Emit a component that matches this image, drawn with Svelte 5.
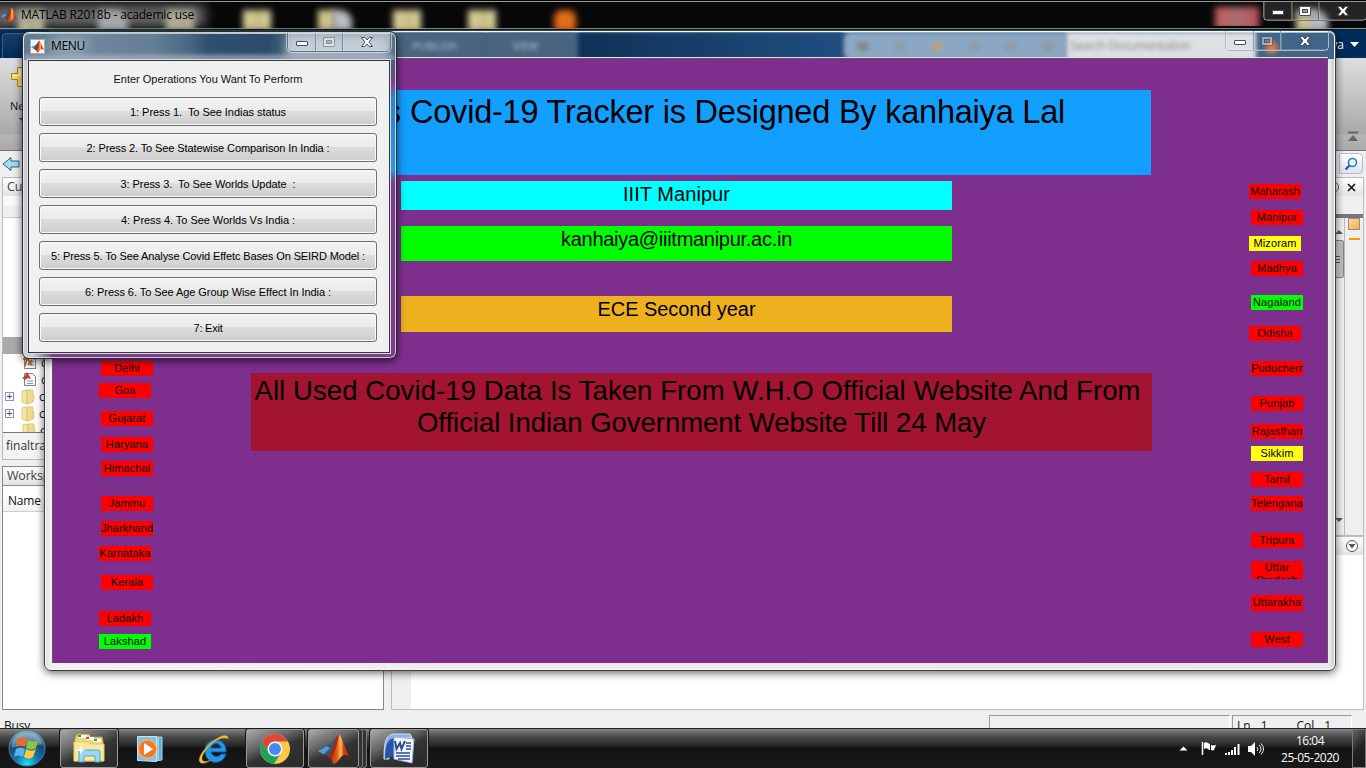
<script>
  // Spreads or tightens the letters of a line so that it takes the given width.
  function fit(node, target) {
    const range = document.createRange();
    range.selectNodeContents(node);
    const natural = range.getBoundingClientRect().width;
    node.style.letterSpacing = (target - natural) / node.textContent.length + 'px';
  }

  function stack(rows, start) {
    let bottom = start;
    return rows.map(([name, top, x = 2, color = 'red', h = 15]) => {
      const gap = top - bottom;
      bottom = top + h;
      return { name, gap, x, color, h };
    });
  }

  const operations = [
    ['1: Press 1.  To See Indias status', 156],
    ['2: Press 2. To See Statewise Comparison In India :', 243],
    ['3: Press 3.  To See Worlds Update  :', 175],
    ['4: Press 4. To See Worlds Vs India :', 174],
    ['5: Press 5. To See Analyse Covid Effetc Bases On SEIRD Model :', 314],
    ['6: Press 6. To See Age Group Wise Effect In India :', 246],
    ['7: Exit', 29]
  ];

  const leftStates = stack([
    ['Delhi', 361], ['Goa', 383, 0], ['Gujarat', 411], ['Haryana', 437], ['Himachal', 461],
    ['Jammu', 496], ['Jharkhand', 521], ['Karnataka', 546, 0], ['Kerala', 575],
    ['Ladakh', 611, 0], ['Lakshad', 634, 0, 'lime']
  ], 59);

  const rightStates = stack([
    ['Maharash', 184, 0], ['Manipur', 210], ['Mizoram', 236, 0, 'yellow'], ['Madhya', 261],
    ['Nagaland', 295, 2, 'lime'], ['Odisha', 326, 0], ['Puducherr', 361], ['Punjab', 396],
    ['Rajasthan', 424], ['Sikkim', 446, 2, 'yellow'], ['Tamil', 472], ['Telengana', 496],
    ['Tripura', 533], ['Uttar Pradesh', 561, 2, 'red tall', 18], ['Uttarakha', 595, 2, 'red', 16], ['West', 632]
  ], 59);

  const desktopIcons = [
    [18, 26, 'folder'], [98, 30, 'paper'], [166, 28, 'folder'], [243, 28, 'folder'], [318, 17, 'folder'],
    [332, 20, 'paper'], [393, 28, 'folder'], [468, 28, 'folder'], [554, 22, 'orange'], [1215, 44, 'pink'],
    [1296, 20, 'folder'], [1308, 20, 'paper']
  ];
</script>

{#snippet matlab(size)}
  <svg width={size} height={size} viewBox="0 0 32 32">
    <defs>
      <linearGradient id="peak" x1="0" x2="1"><stop offset="0" stop-color="#8c2418" /><stop offset=".45" stop-color="#e85a1c" /><stop offset=".6" stop-color="#ffc04a" /><stop offset=".72" stop-color="#d8401a" /><stop offset="1" stop-color="#9c1c10" /></linearGradient>
    </defs>
    <path d="M0 18 9 13 13 15 9 22 5 21Z" fill="#4f9bd0" />
    <path d="M9 13c4-1 6-5 9-9l-4 14-5 5-3-2 6-6Z" fill="#285b80" />
    <path d="M21 1c3 3 6 15 11 23-4-2-6-3-9 0-3 4-5 7-8 7-1-5-3-7-6-8 5-3 8-20 12-22Z" fill="url(#peak)" />
    <path d="M21 1c-2 9-3 18-8 25l-4-3c5-3 8-20 12-22Z" fill="#972c1e" />
  </svg>
{/snippet}

{#snippet controls(kind)}
  <div class="controls {kind}">
    <span><svg width="14" height="8"><rect x="1.5" y="2.5" width="11" height="4" rx=".5" fill="#fff" stroke="#484c5c" /></svg></span>
    <span class="max"><svg width="14" height="12"><rect x="1.5" y="1.5" width="11" height="9" rx=".5" fill="#fff" stroke="#484c5c" /><rect x="4.5" y="4.5" width="5" height="3" fill="#999" stroke="#484c5c" /></svg></span>
    <span class="close"><svg width="14" height="12"><path d="m1.5 1.5h3.3L7 4l2.200-2.500h3.300L9 6l3.500 4.500H9.200L7 8l-2.200 2.500H1.500L5 6Z" fill="#fff" stroke="#484c5c" /></svg></span>
  </div>
{/snippet}

{#snippet chips(list)}
  {#each list as s}
    <div class="chip {s.color}" style="margin-top:{s.gap}px;margin-left:{s.x}px;height:{s.h}px">{s.name}</div>
  {/each}
{/snippet}

{#snippet folder()}
  <svg width="14" height="16" viewBox="0 0 14 16"><path d="M1 2 6 1v14l-5-2Z" fill="#f4e6a3" stroke="#dfc879" /><path d="M6 1h6v12l-6 2Z" fill="#eedc91" stroke="#dbc578" /><path d="M12 6h1v6h-1Z" fill="#fff6c8" stroke="#e0cc83" /></svg>
{/snippet}

<div class="desktop">
  <div class="main">
    <header class="mainbar">
      {#each desktopIcons as [x, w, kind]}
        <i class="blurred {kind}" style="left:{x}px;width:{w}px"></i>
      {/each}
      <i class="glow"></i>
      <span class="logo">{@render matlab(16)}</span>
      <span class="title" use:fit={173}>MATLAB R2018b - academic use</span>
      {@render controls('dark')}
    </header>
    <div class="tabs"><i></i><span>ya</span><svg width="9" height="5"><path d="M0 0h9L4.500 5Z" fill="#fff" /></svg></div>
    <div class="strip">
      <div class="new">
        <svg width="20" height="24" viewBox="0 0 20 24"><path d="M7.500 1.500h6v6h6v6h-6v7h-6v-7h-6v-6h6Z" fill="#f6dc65" stroke="#ad8117" /><path d="M9 3h2v7H3V9h6Z" fill="#fffbd5" /></svg>
        <span>New</span><b></b>
      </div>
      <svg class="collapse" width="12" height="12"><path d="M1 1.500h10" stroke="#666" stroke-width="2" /><path d="m1 10 5-6 5 6Z" fill="#666" /></svg>
    </div>
    <div class="address">
      <svg width="18" height="16" viewBox="0 0 18 16"><path d="M1 8 9 1.500V5h8v6H9v3.500Z" fill="#a9d7ec" stroke="#286391" /></svg>
      <div class="find"><svg width="14" height="14"><circle cx="8.500" cy="5.500" r="4" fill="#e5f4ff" stroke="#347ac0" stroke-width="1.600" /><path d="m5.500 8.500-4 4" stroke="#2459a0" stroke-width="2.200" /></svg></div>
    </div>
    <div class="work">
      <div class="left">
        <section class="files">
          <div class="head">Current Folder</div>
          <div class="subhead"></div>
          <div class="tree">
            <div class="picked"></div>
            <div class="row"><svg width="15" height="15"><rect x="2.500" y="1.500" width="11" height="12" fill="#f7f7fa" stroke="#7c8297" /><path d="M7 7h5M7 10h5" stroke="#858bab" /><path d="M6 0 3 11M1 4h6M6 5l4 5M10 5l-4 5" stroke="#bd6215" stroke-width="1.500" /></svg><span>c</span></div>
            <div class="row"><svg width="15" height="15"><path d="M2.500 1.500h8l3 3v9h-11Z" fill="#f8f9ff" stroke="#727f9d" /><path d="M5 9h6M5 11.500h6" stroke="#7b93be" /><path d="m0 6 3-2 2-4 4 7-4-1-1 2Z" fill="#c73b20" /></svg><span>c</span></div>
            <div class="row"><em>+</em>{@render folder()}<span>c</span></div>
            <div class="row"><em>+</em>{@render folder()}<span>c</span></div>
            <div class="row">{@render folder()}<span>c</span></div>
          </div>
          <div class="details">finaltracker.m</div>
        </section>
        <section class="space">
          <div class="head">Workspace</div>
          <div class="name">Name</div>
          <div class="empty"></div>
        </section>
      </div>
      <div class="right">
        <section class="editor">
          <div class="head"><svg width="30" height="14"><circle cx="4" cy="7" r="5.500" fill="none" stroke="#666" /><path d="m19 4 7 7m0-7-7 7" stroke="#111" stroke-width="1.600" /></svg></div>
          <div class="band"></div>
          <div class="code">
            <div class="scroll"><b class="up"></b><div class="thumb"><i></i><i></i><i></i></div><b class="down"></b></div>
            <div class="marks"><i></i><b></b></div>
          </div>
        </section>
        <section class="command">
          <div class="head"><svg width="14" height="14"><circle cx="7" cy="7" r="5.500" fill="#fff" stroke="#555" /><path d="M3.500 5h7L7 9.500Z" fill="#555" /></svg></div>
          <div class="prompt"></div>
        </section>
      </div>
    </div>
    <footer class="status"><span class="busy">Busy</span><div></div><div class="pos"><span>Ln</span><span>1</span><span>Col</span><span>1</span></div></footer>
  </div>

  <div class="figure">
    <header class="figbar">
      <span class="tab one">PUBLISH</span><span class="tab">VIEW</span><i class="deep"></i>
      <span class="tools"><i></i><i></i><i></i><i></i><i></i><i></i></span>
      <span class="search">Search Documentation</span><i class="flame"></i>
    </header>
    <div class="over">{@render controls('mid')}</div>
    <div class="canvas">
      <div class="side">{@render chips(leftStates)}</div>
      <div class="center">
        <div class="blue"><span>{'This '}</span><span use:fit={655}>Covid-19 Tracker is Designed By kanhaiya Lal</span></div>
        <div class="cyan"><span use:fit={107}>IIIT Manipur</span></div>
        <div class="green"><span use:fit={231}>kanhaiya@iiitmanipur.ac.in</span></div>
        <div class="amber"><span use:fit={158}>ECE Second year</span></div>
        <div class="maroon">
          <span class="first" use:fit={886}>All Used Covid-19 Data Is Taken From W.H.O Official Website And From</span>
          <span use:fit={569}>Official Indian Government Website Till 24 May</span>
        </div>
      </div>
      <div class="side east">{@render chips(rightStates)}</div>
    </div>
  </div>

  <div class="menu">
    <header class="menubar">
      <i class="haze"></i><i class="haze low"></i>
      <span class="icon">{@render matlab(13)}</span><span class="title" use:fit={34}>MENU</span>
      {@render controls('light')}
    </header>
    <div class="body">
      <p><span use:fit={189}>Enter Operations You Want To Perform</span></p>
      {#each operations as [label, w]}
        <button><span use:fit={w}>{label}</span></button>
      {/each}
    </div>
  </div>

  <nav class="taskbar">
    <div class="orb">
      <svg width="38" height="38" viewBox="0 0 38 38">
        <defs>
          <radialGradient id="orb" cx=".5" cy=".95" r=".9"><stop offset="0" stop-color="#1fe3ff" /><stop offset=".35" stop-color="#1377ae" /><stop offset=".7" stop-color="#124a76" /><stop offset="1" stop-color="#88a7b8" /></radialGradient>
        </defs>
        <circle cx="19" cy="19" r="18" fill="url(#orb)" stroke="#4b7b98" />
        <path d="M4 15C7 0 31 0 34 15c-9 4-21-1-30 4Z" fill="#d3e6ee" opacity=".35" />
        <path d="M10 10c3-2 6-2 9 0l-2 8c-3-2-6-2-9 0Z" fill="#ee6a2b" /><path d="M20 11c4 2 7 2 10 0l-2 8c-3 2-6 2-10 0Z" fill="#8ec63f" />
        <path d="M8 20c3-2 6-2 9 0l-2 8c-3-2-6-2-9 0Z" fill="#5eb3ea" /><path d="M18 20c4 2 7 2 10 0l-3 8c-3 2-6 2-9 0Z" fill="#fcca3b" />
      </svg>
    </div>
    <div class="task explorer">
      <svg width="34" height="31" viewBox="0 0 34 31">
        <path d="M3 5 5 1h12l2 3h11l1 4v20H2Z" fill="#f2d675" stroke="#ad924a" />
        <path d="M6 2h9v3H6Z" fill="#fff" /><path d="M6 2h3v2H6Z" fill="#18a53a" /><path d="M14 4h8v3h-8Z" fill="#fff" /><path d="M14 4h3v2h-3Z" fill="#d94c34" /><path d="M21 6h8v3h-8Z" fill="#fff" /><path d="M22 6h3v2h-3Z" fill="#2d89d1" />
        <path d="M2 9h14l2 2h14v17H2Z" fill="#fae99e" stroke="#e1ca73" />
        <path d="M7 29V19q0-2 2-2h17q2 0 2 2v10h-5v-6H12v6Z" fill="#9bd8ef" stroke="#4da5c9" />
        <path d="m9 12 1 4 4 1-4 1-1 4-1-4-4-1 4-1Z" fill="#fff" />
      </svg>
    </div>
    <div class="plain wmp">
      <svg width="28" height="28" viewBox="0 0 28 28"><path d="M18 2h8v23l-8 1Z" fill="#6caecb" stroke="#a4d7ea" /><path d="M22 2v24" stroke="#c4e6f2" /><path d="M1.500 1.500h19v25l-19-1Z" fill="#8ac0dc" stroke="#c4e3f0" /><circle cx="11.500" cy="14" r="9" fill="#f27a21" stroke="#ffb36b" /><path d="M8 8v12l9-6Z" fill="#fff" /></svg>
    </div>
    <div class="plain ie">
      <svg width="34" height="32" viewBox="0 0 34 32">
        <path d="M29 19H14c1 5 8 6 10 2h5c-3 12-21 11-21-3C8 3 30 3 29 19ZM14 15h10c-1-6-9-6-10 0Z" fill="#2595e4" stroke="#0a5ca8" fill-rule="evenodd" />
        <path d="M31 6c1-6-8-4-16 3C5 17-1 28 4 30c3 1 7-1 10-3-5 2-9 2-9-1 0-8 17-25 26-20Z" fill="#f6c436" stroke="#b9851b" stroke-width=".5" />
      </svg>
    </div>
    <div class="task chrome">
      <svg width="32" height="32" viewBox="0 0 32 32"><circle cx="16" cy="16" r="15" fill="#fcc94a" /><path d="M3 8.500A15 15 0 0 1 29 8.500H16a7.500 7.500 0 0 0-6.500 11Z" fill="#dc4639" /><path d="M3 8.500a15 15 0 0 0 12 22.500l7.200-11.500A7.500 7.500 0 0 1 9.500 19.500Z" fill="#22a05d" /><circle cx="16" cy="16" r="7.500" fill="#f5f5f5" /><circle cx="16" cy="16" r="6" fill="#4388ee" /></svg>
    </div>
    <div class="task mat">{@render matlab(32)}</div><i class="layer"></i><i class="layer"></i>
    <div class="task word">
      <svg width="32" height="32" viewBox="0 0 32 32"><path d="M1 26C1 8 3 1 12 1h15l2 4H14C7 5 6 12 6 26Z" fill="#8eafe4" stroke="#d6e4fa" /><path d="M2 26C2 13 4 6 11 5v18Z" fill="#2655a8" /><path d="m11 4 20 2-2 24-18-4Z" fill="#f4f7ff" stroke="#9db5df" /><path d="m12 8 1.500 8 3.500-6 1.500 6L22 8" fill="none" stroke="#244b98" stroke-width="2" /><path d="M23 10h5m-5 3h5m-5 3h5M13 20h14m-14 3h14m-12 3h12" fill="none" stroke="#244b98" stroke-width="1.400" /></svg>
    </div>
    <div class="tray">
      <svg width="9" height="5"><path d="M.5 4.500h8L4.500.5Z" fill="#fff" /></svg>
      <svg class="flag" width="16" height="15"><path d="M1.500 1v13" stroke="#fff" stroke-width="1.500" /><path d="M3 2c3-2 4 1 6 1v6C7 9 6 6 3 8ZM10 4c2 1 3 0 5 0l-2 5c-1 1-2 0-3 0Z" fill="#fff" /></svg>
      <svg class="signal" width="15" height="12"><path d="M1 12v-2M4 12V9M7 12V7M10 12V4M13.500 12V1" stroke="#fff" stroke-width="2" /></svg>
      <svg width="17" height="14"><path d="M1 4h3l4-4v14l-4-4H1Z" fill="#fff" /><path d="M10 5q2 2 0 4M12 3q4 4 0 8M14 1.500q5 5.500 0 11" fill="none" stroke="#eee" /></svg>
      <div class="clock"><span use:fit={28}>16:04</span><span use:fit={58}>25-05-2020</span></div>
    </div>
    <div class="peek"></div>
  </nav>
</div>

<style>
  :global(body) { margin: 0; overflow: hidden; }
  .desktop, .desktop * { box-sizing: border-box; }
  .desktop { position: relative; width: 1366px; height: 768px; overflow: hidden; background: #000; font: 12px "Open Sans", "Noto Sans", sans-serif; color: #111; }
  svg { display: block; flex: none; }
  .main { display: flex; flex-direction: column; height: 728px; background: #efefef; }

  .mainbar { position: relative; flex: none; display: flex; align-items: flex-start; height: 30px; background: #080808; border-top: 1px solid #000; overflow: hidden; box-shadow: inset 0 1px #9c9c9c, inset 0 -1px #052233, inset 0 -2px #8e9792; }
  .blurred { position: absolute; top: 9px; height: 24px; filter: blur(3px); clip-path: inset(-10px -10px 5px -10px); }
  .blurred.folder { background: linear-gradient(90deg, #d9d29b, #c8bd83 60%, #ddd6a5); }
  .blurred.paper { background: #b9bcc1; border-radius: 2px 12px 0 0; }
  .blurred.orange { background: #e36c18; border-radius: 8px; }
  .blurred.pink { background: linear-gradient(90deg, #c4595f, #a8706f 50%, #bc505c); top: 6px; }
  .glow { position: absolute; left: -10px; top: 4px; width: 215px; height: 22px; background: rgba(150, 150, 150, .68); filter: blur(6px); }
  .mainbar .logo { position: relative; margin: 6px 4px 0 1px; }
  .mainbar .title { position: relative; line-height: 28px; color: #000; white-space: nowrap; }
  .mainbar .controls { margin-left: auto; margin-top: 0; margin-right: -1px; }

  .controls { position: relative; display: flex; flex: none; width: 104px; height: 20px; border: 1px solid #aeb9c2; border-top: 0; border-radius: 0 0 5px 5px; }
  .controls span { width: 28px; display: flex; align-items: center; justify-content: center; border-right: 1px solid #909ba4; box-shadow: inset 1px 0 rgba(255, 255, 255, .2), inset 0 -1px rgba(255, 255, 255, .2); }
  .controls span:first-child svg { margin-top: 3px; }
  .controls .max { width: 27px; }
  .controls .close { flex: 1; border: 0; }
  .controls.dark { border-color: #777; background: rgba(120, 120, 120, .25); }
  .controls.dark span { border-color: #666; }
  .controls.light .max svg, .controls.mid .max svg { opacity: .45; }
  .controls.light { background: rgba(230, 235, 240, .5); border-color: #65717d; box-shadow: 0 0 0 1px rgba(235, 240, 245, .6); }
  .controls.light span { border-color: #7d8994; }

  .tabs { flex: none; display: flex; align-items: center; justify-content: flex-end; height: 28px; padding-right: 7px; color: #fff; background: #002c5c; }
  .tabs i { width: 42px; height: 25px; margin: 3px auto 0 2px; background: linear-gradient(#163e68, #052c5c); border: 1px solid #396083; border-bottom: 0; border-radius: 4px 0 0 0; }
  .tabs span { margin-right: 6px; }
  .strip { flex: none; height: 93px; display: flex; justify-content: space-between; align-items: flex-end; background: linear-gradient(#dedede, #a9a9a9 76px, #b5b5b5 77px, #aaa); border-bottom: 1px solid #777; }
  .new { height: 84px; width: 40px; padding-left: 10px; font-size: 11px; }
  .new span { display: block; margin-top: 8px; line-height: 16px; }
  .new b { display: block; margin-left: 9px; border: 3px solid transparent; border-top-color: #333; margin-top: 4px; width: 0; }
  .collapse { margin: 0 7px 7px 0; }
  .address { flex: none; height: 25px; display: flex; align-items: center; justify-content: space-between; padding: 0 3px 0 2px; background: #efefef; }
  .find { width: 24px; height: 21px; display: flex; align-items: center; justify-content: center; border: 1px solid #b6bdc9; border-radius: 0 4px 4px 0; background: linear-gradient(#fff, #dce4f1); }

  .work { display: flex; height: 534px; padding: 1px 2px 0; gap: 7px; flex: none; }
  .left { width: 382px; display: flex; flex-direction: column; gap: 6px; }
  section { display: flex; flex-direction: column; border: 1px solid #bbb; background: #fff; }
  .files { height: 283px; }
  .space { flex: 1; border-color: #808890; }
  .head { flex: none; height: 18px; line-height: 17px; padding-left: 4px; font-size: 12.5px; letter-spacing: -.2px; color: #444; background: linear-gradient(#fff, #e3e3e3); overflow: hidden; white-space: nowrap; }
  .subhead { flex: none; height: 22px; background: linear-gradient(#fafafa 9px, #edeff2 10px); border-bottom: 1px solid #ccc; }
  .tree { height: 219px; overflow: hidden; border-bottom: 1px solid #777; }
  .picked { height: 17px; margin-top: 119px; background: #aaa; }
  .row { height: 17px; display: flex; align-items: center; gap: 4px; padding-left: 19px; }
  .row em { width: 9px; height: 9px; font: 10px/7px "Liberation Sans", sans-serif; text-align: center; color: #204a8d; border: 1px solid #9096a5; margin: 0 3px 0 -17px; }
  .details { line-height: 26px; padding-left: 3px; color: #333; background: #f3f3f3; flex: 1; }
  .name { flex: none; height: 27px; line-height: 29px; padding-left: 5px; letter-spacing: -.2px; background: linear-gradient(#fff 10px, #f0f1f3); border-top: 1px solid #888; border-bottom: 1px solid #d0d0d0; }
  .right { flex: 1; display: flex; flex-direction: column; }
  .editor { height: 359px; }
  .right .head { display: flex; justify-content: flex-end; align-items: center; padding-right: 4px; }
  .band { height: 22px; background: #f0f0f0; border-bottom: 4px solid #777; }
  .code { flex: 1; display: flex; justify-content: flex-end; background: #efefef; }
  .scroll { width: 17px; display: flex; flex-direction: column; align-items: center; border-right: 1px solid #bbb; background: #f0f0f0; }
  .scroll b { border: 4px solid transparent; width: 0; margin-left: 6px !important; }
  .up { border-bottom-color: #555 !important; margin-top: 8px; }
  .down { border-top-color: #555 !important; margin: auto 0 9px; }
  .thumb { width: 16px; height: 38px; margin-top: 6px; border: 1px solid #888; border-radius: 2px; background: linear-gradient(90deg, #eee, #bbb); display: flex; flex-direction: column; align-items: center; justify-content: center; gap: 2px; }
  .thumb i { width: 8px; height: 1px; background: #555; }
  .marks { width: 18px; display: flex; flex-direction: column; align-items: center; }
  .marks i { width: 12px; height: 12px; background: linear-gradient(135deg, #ffd79e, #ffaa42); border: 1px solid #8e8e8e; }
  .marks b { width: 11px; height: 2px; margin-top: 8px; background: #ff9900; }
  .command { flex: 1; }
  .prompt { flex: 1; border-left: 19px solid #efefef; }
  .status { flex: 1; min-height: 0; display: flex; justify-content: flex-end; padding: 5px 14px 0 4px; gap: 2px; overflow: hidden; }
  .status .busy { margin-right: auto; margin-top: 2px; line-height: 17px; letter-spacing: -.2px; }
  .status div { width: 241px; height: 20px; border: 1px solid #999; border-right-color: #fff; }
  .status .pos { width: 120px; display: flex; gap: 10px; padding-left: 4px; line-height: 20px; }
  .pos span:nth-child(3) { margin-left: 19px; }

  .figure { position: absolute; left: 44px; top: 30px; width: 1292px; height: 641px; padding: 1px 7px 7px; border: 1px solid #3c4042; border-radius: 7px; background: linear-gradient(90deg, #dedede, #f1f1f1 6px, #e8e8e8 1284px, #ccc); box-shadow: 0 2px 8px rgba(0, 0, 0, .6), inset 0 0 0 1px #f7f7f7; }
  .figbar { display: flex; height: 27px; margin: 0 -6px; padding-left: 350px; overflow: hidden; border-radius: 5px 5px 0 0; background: #416489; box-shadow: inset 0 1px #aac0cd; }
  .figbar > * { filter: blur(2px); flex: none; height: 28px; }
  .tab { width: 89px; padding-right: 12px; text-align: center; font: 11px/27px "Open Sans", sans-serif; color: #bac8d6; background: #48647f; margin-right: 2px; }
  .deep { width: 266px; background: linear-gradient(90deg, #103158, #1f4e80); }
  .tools { width: 222px; background: #8ca7c3; display: flex; align-items: center; justify-content: space-around; border-radius: 8px 0 0 8px; }
  .tools i { width: 12px; height: 9px; background: #8e9aa6; border-radius: 4px; }
  .tools i:first-child { background: #84888c; }
  .tools i:nth-child(3) { background: #b7a283; }
  .search { width: 190px; padding-left: 4px; font: 12px/27px "Open Sans", sans-serif; letter-spacing: -.4px; color: #888; background: #dde1e4; }
  .flame { width: 13px; height: 13px !important; margin: 9px 9px 9px 9px; background: #ce7848; border-radius: 7px; }
  .over { position: absolute; right: 6px; top: 0; }
  .canvas { display: flex; height: 605px; margin-top: -1px; background: #7e2f8e; border: solid #64506b; border-width: 1px 1px 0; font: 11px "Liberation Sans", Arial, sans-serif; color: #000; box-shadow: 0 -1px #dde4e5; position: relative; }
  .side { width: 54px; margin-left: 46px; }
  .side.east { margin: 0 0 0 97px; }
  .chip { width: 52px; line-height: 15px; text-align: center; letter-spacing: .1px; overflow: hidden; background: red; }
  .chip.tall { line-height: 13px; }
  .chip.lime { background: #0f0; }
  .chip.yellow { background: #ffff11; }
  .center { width: 901px; margin-left: 98px; display: flex; flex-direction: column; align-items: flex-start; white-space: pre; }
  .center > div { width: 551px; margin-left: 150px; text-align: center; font-size: 20px; }
  .center > .blue { width: 900px; height: 85px; margin: 31px 0 6px; padding: 2px 86px 0 0; text-align: right; font-size: 32.5px; line-height: 40px; background: #139fff; }
  .center > .cyan { height: 29px; line-height: 27px; margin-bottom: 16px; background: #0ff; }
  .center > .green { height: 35px; line-height: 27px; margin-bottom: 35px; background: #0f0; }
  .center > .amber { height: 36px; line-height: 27px; margin-bottom: 41px; background: #edb120; }
  .center > .maroon { width: 901px; height: 78px; margin-left: 0; padding-top: 2px; font-size: 27.5px; line-height: 32px; background: #a2142f; display: flex; flex-direction: column; align-items: center; }
  .maroon .first { padding-right: 8px; }

  .menu { position: absolute; left: 22px; top: 31px; width: 375px; height: 328px; padding: 1px 6px 6px 5px; border: 1px solid #252c32; border-radius: 7px; background: linear-gradient(90deg, #c9cdd0 0 10px, transparent 30px), linear-gradient(#4d6780, #60507c 40px, #883c99 52px, #2687d0 66px, #2896e8 138px, #7e3d8e 150px); box-shadow: 0 2px 8px rgba(0, 0, 0, .65), inset 0 0 0 1px rgba(235, 240, 245, .75); }
  .menubar { position: relative; display: flex; height: 27px; margin: 0 -5px 0 -4px; border-radius: 5px 5px 0 0; background: linear-gradient(90deg, #5f7a92, #6f889d 60px, #647e96 130px, #4a6782 165px, #2f4f6e 185px, #2c4c6a 245px, #5b738a 275px, #526c86); box-shadow: inset 0 1px #b9c6d0; overflow: hidden; }
  .haze { position: absolute; left: 262px; top: 4px; width: 102px; height: 22px; background: rgba(205, 212, 218, .65); filter: blur(4px); }
  .haze.low { left: 0; top: 22px; width: 370px; height: 6px; background: rgba(175, 180, 195, .75); filter: blur(2px); }
  .menubar .icon { position: relative; margin: 6px 6px 0 6px; width: 15px; height: 15px; padding: 1px; background: #f6f6f6; outline: 1px solid #aaa; outline-offset: -1px; }
  .menubar .title { position: relative; line-height: 26px; color: #000; text-shadow: 0 0 8px #d8e0e8, 0 0 14px #d8e0e8, 0 0 20px #d8e0e8; }
  .menubar .controls { margin: -1px 4px 0 auto; height: 20px; }
  .body { display: flex; flex-direction: column; gap: 7px; height: 293px; padding: 0 12px 10px 10px; background: #f0f0f0; border: 1px solid #34383b; box-shadow: 0 0 0 1px #d8dadc; font: 11px "Liberation Sans", Arial, sans-serif; white-space: pre; position: relative; }
  .body p { margin: 0; height: 29px; padding-top: 11px; line-height: 14px; text-align: center; }
  .body button { height: 29px; flex: none; padding: 0; font: inherit; color: #000; white-space: pre; border: 1px solid #707070; border-radius: 3px; background: linear-gradient(#f3f3f3, #ebebeb 49%, #dddddd 50%, #cdcdcd); box-shadow: inset 0 0 0 1px #f9f9f9; }

  .taskbar { position: absolute; left: 0; top: 728px; width: 1366px; height: 40px; display: flex; background: linear-gradient(#858585, #484848 8px, #252525 17px, #131313 19px, #191919); border-top: 1px solid #222; }
  .orb { margin: 0 14px 0 8px; }
  .task { height: 39px; width: 58px; display: flex; align-items: center; justify-content: center; border: 1px solid #999; border-radius: 3px; background: linear-gradient(155deg, #aaa, #666 35%, #333 55%, #292929); box-shadow: 0 0 0 1px #161616; }
  .plain { display: flex; align-items: center; }
  .wmp { margin: 0 33px 0 18px; }
  .ie { margin-right: 15px; }
  .mat { width: 51px; margin-left: 4px; }
  .layer { width: 4px; border: solid #777; border-width: 1px 1px 1px 0; border-radius: 0 3px 3px 0; background: #333; }
  .word { margin-left: 3px; }
  .tray { margin-left: auto; display: flex; align-items: center; color: #fff; }
  .flag { margin: 0 8px 0 13px; }
  .signal { margin-right: 7px; }
  .clock { width: 66px; margin: 0 9px 0 13px; display: flex; flex-direction: column; align-items: center; line-height: 17px; }
  .peek { width: 14px; border: 1px solid #7b7b7b; background: linear-gradient(135deg, #666, #222 50%, #181818); }
</style>
